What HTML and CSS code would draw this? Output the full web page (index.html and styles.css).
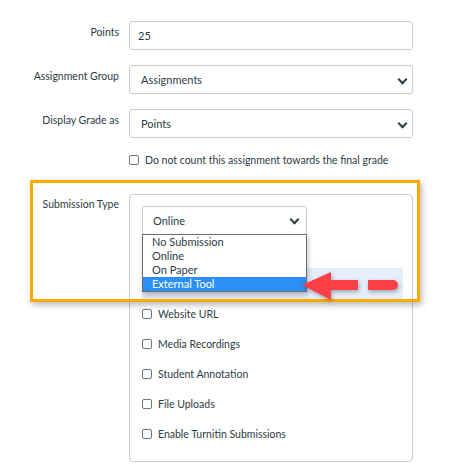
FILE: index.html
```html
<!DOCTYPE html>
<html>
<head>
<meta charset="utf-8">
<link rel="stylesheet" href="styles.css">
</head>
<body>
<div class="form">
  <div class="row">
    <div class="label">Points</div>
    <div class="field input">25</div>
  </div>
  <div class="row">
    <div class="label">Assignment Group</div>
    <div class="field select">Assignments<span class="chev"></span></div>
  </div>
  <div class="row">
    <div class="label">Display Grade as</div>
    <div class="field select">Points<span class="chev"></span></div>
  </div>
  <div class="row check-row">
    <div class="label"></div>
    <label class="check"><span class="box"></span>Do not count this assignment towards the final grade</label>
  </div>
  <div class="row sub-row">
    <div class="label">Submission Type</div>
    <div class="panel">
      <div class="field select small">Online<span class="chev"></span></div>
      <div class="band"></div>
      <ul class="dropdown">
        <li>No Submission</li>
        <li>Online</li>
        <li>On Paper</li>
        <li class="active">External Tool</li>
      </ul>
      <ul class="checks">
        <li><span class="box"></span>Website URL</li>
        <li><span class="box"></span>Media Recordings</li>
        <li><span class="box"></span>Student Annotation</li>
        <li><span class="box"></span>File Uploads</li>
        <li><span class="box"></span>Enable Turnitin Submissions</li>
      </ul>
    </div>
  </div>
  <div class="highlight"></div>
  <svg class="arrow" width="104" height="34" viewBox="0 0 104 34">
    <g fill="#fd3f47">
      <polygon points="2,15 31,2 31,10 58,10 58,20 31,20 31,30"/>
      <path d="M68,10 H93 A5,5 0 0 1 93,20 H68 Z"/>
    </g>
  </svg>
</div>
</body>
</html>
```
FILE: styles.css
```css
* { box-sizing: border-box; }
html, body { margin: 0; padding: 0; background: #fff; }
body {
  font-family: Lato, "Open Sans", sans-serif;
  font-size: 10.5px;
  color: #2d3b45;
  width: 475px;
  height: 468px;
  overflow: hidden;
}
.form {
  position: relative;
  padding-top: 21px;
}
.row {
  display: grid;
  grid-template-columns: 119px 284px;
  column-gap: 10px;
  margin-bottom: 15px;
}
.label {
  text-align: right;
  padding-top: 4px;
  line-height: 14px;
}
.field {
  height: 29px;
  border: 1px solid #c7cdd1;
  border-radius: 3px;
  background: #fff;
  display: flex;
  align-items: center;
  position: relative;
  padding-left: 8px;
  font-size: 11px;
}
.select { padding-left: 11px; }
.chev {
  position: absolute;
  right: 6px;
  top: 10px;
  width: 7px;
  height: 7px;
  border-right: 2.2px solid #2d3b45;
  border-bottom: 2.2px solid #2d3b45;
  transform: rotate(45deg);
}
.check-row { margin-top: 4px; margin-bottom: 0; }
.check {
  display: flex;
  align-items: center;
  height: 14px;
}
.box {
  display: inline-block;
  width: 10px;
  height: 10px;
  border: 1px solid #6b7780;
  border-radius: 2px;
  margin-right: 6px;
  flex: none;
  background: #fff;
}
.sub-row { margin-top: 27px; }
.sub-row .label { padding-top: 3px; }
.panel {
  position: relative;
  border: 1px solid #c7cdd1;
  border-radius: 4px;
  height: 268px;
  padding: 11px 12px 0;
}
.small { width: 165px; height: 29px; padding-left: 10px; }
.small .chev { right: 8px; top: 9px; }
.band {
  position: absolute;
  left: 12px;
  top: 73px;
  width: 261px;
  height: 31px;
  background: #e4effb;
}
.dropdown {
  position: absolute;
  left: 12px;
  top: 39px;
  width: 165px;
  margin: 0;
  padding: 0;
  list-style: none;
  border: 1px solid #6d6d6d;
  background: #fff;
  box-shadow: 1px 3px 5px rgba(0,0,0,.25);
  font-size: 11px;
  z-index: 2;
}
.dropdown li {
  height: 14px;
  line-height: 14px;
  padding-left: 9px;
}
.dropdown li.active {
  background: #2b8ff7;
  color: #fff;
}
.checks {
  list-style: none;
  margin: 0;
  padding: 0;
  margin-top: 72px;
}
.checks li {
  display: flex;
  align-items: center;
  height: 14px;
  margin-bottom: 16px;
}
.highlight {
  position: absolute;
  left: 30px;
  top: 180px;
  width: 390px;
  height: 122px;
  border: 3px solid #fbab00;
  box-shadow: 2px 3px 6px rgba(0,0,0,.28);
  z-index: 3;
  pointer-events: none;
}
.arrow {
  position: absolute;
  left: 300px;
  top: 270px;
  z-index: 4;
  filter: drop-shadow(1px 2px 2px rgba(0,0,0,.3));
}
```
